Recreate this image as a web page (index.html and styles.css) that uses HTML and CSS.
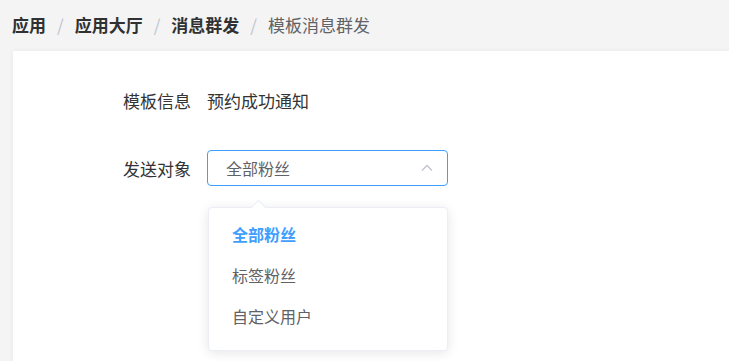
FILE: index.html
```html
<!DOCTYPE html>
<html>
<head>
  <link rel="stylesheet" href="styles.css">
</head>
<body>
  <div class="breadcrumb">
    <span class="crumb strong">应用</span>
    <span class="sep">/</span>
    <span class="crumb strong">应用大厅</span>
    <span class="sep">/</span>
    <span class="crumb strong">消息群发</span>
    <span class="sep">/</span>
    <span class="crumb">模板消息群发</span>
  </div>
  <div class="card">
    <div class="form">
      <div class="form-row">
        <div class="form-label">模板信息</div>
        <div class="form-value">预约成功通知</div>
      </div>
      <div class="form-row row-select">
        <div class="form-label">发送对象</div>
        <div class="select">
          <div class="select-input">
            <span>全部粉丝</span>
            <svg class="select-arrow" width="12" height="8" viewBox="0 0 12 8">
              <path d="M1 6.5 L6 1.5 L11 6.5" fill="none" stroke="#c0c4cc" stroke-width="1.3"/>
            </svg>
          </div>
          <div class="dropdown">
            <div class="dropdown-arrow"></div>
            <div class="option selected">全部粉丝</div>
            <div class="option">标签粉丝</div>
            <div class="option">自定义用户</div>
          </div>
        </div>
      </div>
    </div>
  </div>
</body>
</html>
```
FILE: styles.css
```css
* {
  margin: 0;
  padding: 0;
  box-sizing: border-box;
}

body {
  background-color: #f4f4f4;
  font-family: "Noto Sans CJK SC", "Noto Sans", sans-serif;
  font-size: 17px;
  color: #333;
  width: 729px;
  height: 361px;
  overflow: hidden;
}

.breadcrumb {
  height: 51px;
  display: flex;
  align-items: center;
  padding-left: 12px;
  padding-bottom: 2px;
}

.crumb {
  color: #606266;
}

.crumb.strong {
  color: #303133;
  font-weight: bold;
}

.sep {
  color: #c0c4cc;
  margin: 0 11px;
}

.card {
  margin-left: 13px;
  background-color: #fff;
  height: 320px;
  padding-top: 31px;
  box-shadow: 0 0 6px rgba(0, 0, 0, 0.05);
}

.form {
  padding-left: 98px;
}

.form-row {
  display: flex;
  align-items: center;
  height: 36px;
}

.row-select {
  margin-top: 32px;
}

.form-label {
  width: 96px;
  padding-right: 16px;
  text-align: right;
  color: #333;
}

.form-value {
  color: #333;
}

.select {
  position: relative;
  width: 241px;
}

.select-input {
  height: 36px;
  border: 1px solid #409eff;
  border-radius: 4px;
  display: flex;
  align-items: center;
  justify-content: space-between;
  padding: 0 14px 0 18px;
  color: #606266;
  font-size: 16px;
}

.dropdown {
  position: absolute;
  top: 57px;
  left: 1px;
  width: 240px;
  height: 144px;
  background-color: #fff;
  border: 1px solid #ebeef5;
  border-radius: 4px;
  box-shadow: 0 2px 12px rgba(0, 0, 0, 0.1);
  padding: 6px 0 12px 0;
}

.dropdown-arrow {
  position: absolute;
  top: -6px;
  left: 44px;
  width: 11px;
  height: 11px;
  background-color: #fff;
  border-top: 1px solid #ebeef5;
  border-left: 1px solid #ebeef5;
  transform: rotate(45deg);
}

.option {
  height: 41px;
  line-height: 41px;
  padding-left: 23px;
  color: #606266;
  font-size: 16px;
}

.option.selected {
  color: #409eff;
  font-weight: bold;
}
```
